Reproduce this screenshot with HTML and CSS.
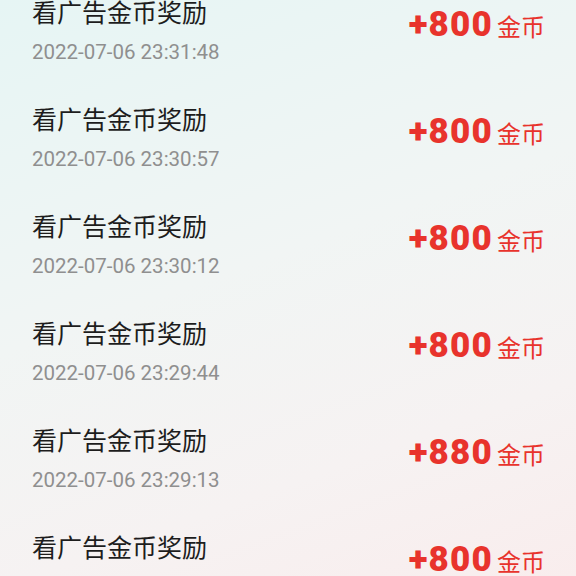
FILE: index.html
```html
<!DOCTYPE html>
<html lang="zh-CN">
<head>
<meta charset="utf-8">
<title>金币明细</title>
<link rel="stylesheet" href="styles.css">
</head>
<body>
<ul class="list">
  <li class="row">
    <div class="info"><div class="title">看广告金币奖励</div><div class="date">2022-07-06 23:31:48</div></div>
    <div class="amount"><span class="num">+800</span><span class="unit">金币</span></div>
  </li>
  <li class="row">
    <div class="info"><div class="title">看广告金币奖励</div><div class="date">2022-07-06 23:30:57</div></div>
    <div class="amount"><span class="num">+800</span><span class="unit">金币</span></div>
  </li>
  <li class="row">
    <div class="info"><div class="title">看广告金币奖励</div><div class="date">2022-07-06 23:30:12</div></div>
    <div class="amount"><span class="num">+800</span><span class="unit">金币</span></div>
  </li>
  <li class="row">
    <div class="info"><div class="title">看广告金币奖励</div><div class="date">2022-07-06 23:29:44</div></div>
    <div class="amount"><span class="num">+800</span><span class="unit">金币</span></div>
  </li>
  <li class="row">
    <div class="info"><div class="title">看广告金币奖励</div><div class="date">2022-07-06 23:29:13</div></div>
    <div class="amount"><span class="num">+880</span><span class="unit">金币</span></div>
  </li>
  <li class="row">
    <div class="info"><div class="title">看广告金币奖励</div><div class="date">2022-07-06 23:28:40</div></div>
    <div class="amount"><span class="num">+800</span><span class="unit">金币</span></div>
  </li>
</ul>
</body>
</html>
```
FILE: styles.css
```css
html, body {
  margin: 0;
  padding: 0;
  height: 100%;
  overflow: hidden;
}
body {
  background: linear-gradient(160deg, #e6f5f4 0%, #f1f5f4 45%, #f6f2f2 75%, #f9eded 100%);
  font-family: "Noto Sans CJK SC", "Noto Sans", sans-serif;
}
.list {
  list-style: none;
  margin: -24px 0 0 0;
  padding: 0;
}
.row {
  display: flex;
  align-items: center;
  justify-content: space-between;
  height: 107px;
  padding: 0 31px 0 32px;
  box-sizing: border-box;
}
.info {
  display: flex;
  flex-direction: column;
  gap: 13px;
}
.title {
  font-size: 25px;
  line-height: 32px;
  color: #1d1d1d;
}
.date {
  font-family: Roboto, "Liberation Sans", sans-serif;
  font-size: 20.5px;
  line-height: 24px;
  color: #8f8f8f;
}
.amount {
  display: flex;
  align-items: baseline;
  gap: 4px;
  margin-top: -9px;
  color: #e8332c;
}
.num {
  font-family: Roboto, "Liberation Sans", sans-serif;
  font-weight: 900;
  font-size: 35px;
  line-height: 40px;
  letter-spacing: 1.2px;
}
.unit {
  font-size: 24px;
  line-height: 30px;
}
```
